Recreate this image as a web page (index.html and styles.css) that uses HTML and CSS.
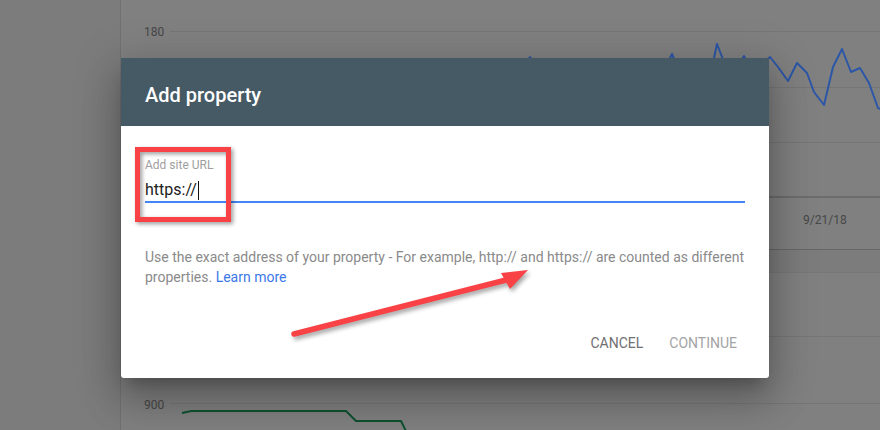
FILE: index.html
```html
<!DOCTYPE html>
<html lang="en">
<head>
<meta charset="utf-8">
<title>Add property</title>
<link rel="stylesheet" href="styles.css">
</head>
<body>
<div class="page">
  <aside class="sidebar"></aside>
  <main class="main">
    <section class="card card-top">
      <svg class="chart" width="759" height="249" viewBox="0 0 759 249">
        <line class="grid" x1="49" y1="31.5" x2="759" y2="31.5"/>
        <line class="grid" x1="0" y1="87.5" x2="759" y2="87.5"/>
        <line class="grid" x1="0" y1="142.5" x2="759" y2="142.5"/>
        <line class="axis" x1="0" y1="197" x2="759" y2="197"/>
        <text class="tick" x="23" y="36">180</text>
        <text class="tick" x="682" y="224">9/21/18</text>
        <polyline class="line-blue" points="380,80 399,72 409,57 419,72 440,78 540,76 551,54 560,76 590,72 596,44 603,62 614,70 623,56 630,70 640,64 649,57 657,67 667,81 676,63 686,73 693,92 703,105 712,67 721,49 730,72 739,68 748,83 757,108 762,110"/>
      </svg>
    </section>
    <div class="tabbar"></div>
    <section class="card card-bottom">
      <svg class="chart" width="759" height="157" viewBox="0 0 759 157">
        <line class="grid" x1="0" y1="63.5" x2="759" y2="63.5"/>
        <line class="grid" x1="49" y1="130.5" x2="759" y2="130.5"/>
        <text class="tick" x="23" y="136">900</text>
        <polyline class="line-green" points="61,140 70,138 225,138 235,148 280,148 286,160"/>
      </svg>
    </section>
  </main>
</div>

<section class="dialog">
  <header class="dialog-head"><h2 class="dialog-title">Add property</h2></header>
  <div class="dialog-body">
    <div class="field">
      <div class="field-label">Add site URL</div>
      <div class="field-input">https://<span class="caret"></span></div>
    </div>
    <p class="hint">Use the exact address of your property - For example, http:// and https:// are counted as different properties. <a class="link" href="#">Learn more</a></p>
  </div>
  <div class="actions">
    <button class="btn">CANCEL</button>
    <button class="btn btn-disabled">CONTINUE</button>
  </div>
  <div class="callout-box"></div>
</section>

<svg class="annotation" width="880" height="430" viewBox="0 0 880 430">
  <line class="arrow-shaft" x1="294" y1="334" x2="510" y2="279"/>
  <polygon class="arrow-head" points="528,270 501,273 510,289"/>
</svg>
</body>
</html>
```

FILE: styles.css
```css
* { box-sizing: border-box; }
html, body {
  margin: 0;
  padding: 0;
  width: 880px;
  height: 430px;
  overflow: hidden;
  font-family: Roboto, "Liberation Sans", Arial, sans-serif;
}
.page {
  display: grid;
  grid-template-columns: 121px 1fr;
  height: 430px;
  background: #808080;
}
.sidebar {
  background: #7c7c7c;
  border-right: 1px solid #727272;
}
.main {
  display: flex;
  flex-direction: column;
}
.card-top {
  height: 250px;
  border-bottom: 1px solid #676767;
}
.tabbar {
  height: 23px;
  background: #7c7c7c;
  border-bottom: 1px solid #777;
}
.chart { display: block; }
.grid { stroke: #767676; stroke-width: 1; }
.axis { stroke: #666; stroke-width: 1.5; }
.tick {
  font-family: Roboto, "Liberation Sans", sans-serif;
  font-size: 12px;
  fill: #474747;
}
.line-blue {
  fill: none;
  stroke: #2c56a6;
  stroke-width: 2;
  stroke-linejoin: round;
}
.line-green {
  fill: none;
  stroke: #0f5230;
  stroke-width: 2;
}

/* dialog */
.dialog {
  position: absolute;
  left: 121px;
  top: 58px;
  width: 648px;
  height: 320px;
  background: #fff;
  border-radius: 0 0 3px 3px;
  display: flex;
  flex-direction: column;
  box-shadow: 0 11px 15px -7px rgba(0,0,0,.25), 0 24px 38px 3px rgba(0,0,0,.16), 0 9px 46px 8px rgba(0,0,0,.14);
}
.dialog-head {
  height: 68px;
  background: #465a65;
  padding: 25px 24px 0;
}
.dialog-title {
  margin: 0;
  font-size: 20px;
  line-height: 24px;
  font-weight: 500;
  color: #fff;
}
.dialog-body {
  padding: 31px 24px 0;
}
.field-label {
  font-size: 12px;
  line-height: 16px;
  color: #9e9e9e;
}
.field-input {
  margin-top: 7px;
  font-size: 16px;
  line-height: 20px;
  color: #212121;
  padding-bottom: 1px;
  border-bottom: 2px solid #4285f4;
  display: flex;
  align-items: center;
}
.caret {
  display: inline-block;
  width: 1px;
  height: 19px;
  background: #111;
  margin-left: 1px;
}
.hint {
  margin: 44px 0 0;
  font-size: 14px;
  line-height: 20px;
  color: #8a8a8a;
}
.link {
  color: #3b78e7;
  text-decoration: none;
}
.actions {
  margin-top: auto;
  display: flex;
  justify-content: flex-end;
  gap: 26px;
  padding: 0 32px 25px;
}
.btn {
  border: 0;
  background: none;
  padding: 0;
  font-family: Roboto, "Liberation Sans", sans-serif;
  font-size: 14px;
  line-height: 20px;
  font-weight: 400;
  color: #707070;
}
.btn-disabled { color: #a4a4a4; }

.callout-box {
  position: absolute;
  left: 14px;
  top: 89px;
  width: 96px;
  height: 75px;
  border: 5px solid #f84245;
  filter: drop-shadow(2px 2px 2px rgba(0,0,0,.4));
}

.annotation {
  position: absolute;
  left: 0;
  top: 0;
  pointer-events: none;
  filter: drop-shadow(2px 3px 2px rgba(0,0,0,.35));
}
.arrow-shaft {
  stroke: #f84245;
  stroke-width: 5.5;
  stroke-linecap: round;
}
.arrow-head { fill: #f84245; }
```
